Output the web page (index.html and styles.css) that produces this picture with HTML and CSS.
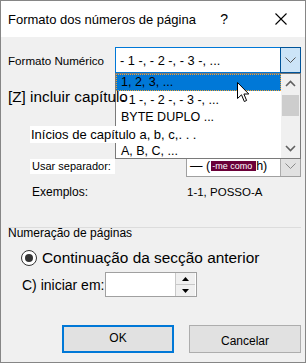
FILE: index.html
```html
<!DOCTYPE html>
<html lang="pt">
<head>
    <meta charset="UTF-8">
    <title>Formato dos números de página</title>
    <link rel="stylesheet" href="styles.css">
</head>
<body>

    <div class="dialog">
        <div class="titlebar">
            <span class="title">Formato dos números de página</span>
            <span class="title-actions">
                <span class="help">?</span>
                <svg class="close" width="12" height="12" viewBox="0 0 12 12">
                    <path d="M0.5 0.5 L11.5 11.5 M11.5 0.5 L0.5 11.5" stroke="#000" stroke-width="1.1" fill="none"/>
                </svg>
            </span>
        </div>

        <div class="content">
            <div class="row row-format">
                <span class="lbl-format">Formato Numérico</span>
                <div class="combo combo-open">
                    <span class="combo-text">- 1 -, - 2 -, - 3 -, ...</span>
                    <span class="combo-btn">
                        <svg width="11" height="6" viewBox="0 0 11 6"><path d="M0.5 0.5 L5.5 5.5 L10.5 0.5" stroke="#555" fill="none"/></svg>
                    </span>
                </div>
            </div>

            <div class="row row-chapter">
                <span class="chapter-label">[Z] incluir capítulo</span>
            </div>

            <div class="row row-starts">
                <span class="starts-label">Inícios de capítulo a, b, c,. . .</span>
            </div>

            <div class="row row-sep">
                <span class="sep-label">Usar separador:</span>
                <div class="combo combo-sep">
                    <span class="combo-text">— (<span class="tag">-me como</span>h)</span>
                    <span class="combo-btn">
                        <svg width="11" height="6" viewBox="0 0 11 6"><path d="M0.5 0.5 L5.5 5.5 L10.5 0.5" stroke="#8a8a8a" fill="none"/></svg>
                    </span>
                </div>
            </div>

            <div class="row row-examples">
                <span class="ex-label">Exemplos:</span>
                <span class="ex-value">1-1, POSSO-A</span>
            </div>

            <div class="group">
                <div class="group-title">Numeração de páginas</div>

                <div class="row row-radio">
                    <span class="radio"><span class="radio-dot"></span></span>
                    <span class="radio-label">Continuação da secção anterior</span>
                </div>

                <div class="row row-spin">
                    <span class="spin-label">C) iniciar em:</span>
                    <div class="spin">
                        <span class="spin-field"></span>
                        <span class="spin-btns">
                            <span class="spin-btn"><svg width="7" height="4" viewBox="0 0 7 4"><path d="M0 4 L3.5 0 L7 4 Z" fill="#000"/></svg></span>
                            <span class="spin-btn"><svg width="7" height="4" viewBox="0 0 7 4"><path d="M0 0 L3.5 4 L7 0 Z" fill="#000"/></svg></span>
                        </span>
                    </div>
                </div>
            </div>

            <div class="buttons">
                <button class="btn btn-default">OK</button>
                <button class="btn btn-cancel">Cancelar</button>
            </div>
        </div>

        <!-- open dropdown list of the format combo -->
        <div class="listbox">
            <div class="list-items">
                <div class="item item-selected">1, 2, 3, ...</div>
                <div class="item">- 1 -, - 2 -, - 3 -, ...</div>
                <div class="item">BYTE DUPLO ...</div>
                <div class="item"></div>
                <div class="item">A, B, C, ...</div>
            </div>
            <div class="scrollbar">
                <span class="sb-arrow">
                    <svg width="11" height="7" viewBox="0 0 11 7"><path d="M1 6 L5.5 1.5 L10 6" stroke="#606060" stroke-width="1.6" fill="none"/></svg>
                </span>
                <span class="sb-thumb"></span>
                <span class="sb-arrow sb-down">
                    <svg width="11" height="7" viewBox="0 0 11 7"><path d="M1 1 L5.5 5.5 L10 1" stroke="#606060" stroke-width="1.6" fill="none"/></svg>
                </span>
            </div>
        </div>

        <svg class="cursor" width="13" height="21" viewBox="0 0 13 21">
            <path d="M0.5 0.5 L0.5 16.5 L4.5 12.8 L7.3 19.5 L9.6 18.5 L6.9 12 L11.8 12 Z" fill="#fff" stroke="#000" stroke-width="1"/>
        </svg>
    </div>

</body>
</html>
```

FILE: styles.css
```css
body {
    margin: 0;
    font-family: 'Liberation Sans', Arial, sans-serif;
    color: #000;
}

.dialog {
    position: relative;
    width: 306px;
    height: 363px;
    box-sizing: border-box;
    border: 1px solid #868686;
    background-color: #f0f0f0;
    overflow: hidden;
}

.titlebar {
    height: 36px;
    background-color: #fff;
    display: flex;
    align-items: center;
    padding: 0 18px 0 7px;
    font-size: 13px;
}

.title {
    white-space: nowrap;
}

.title-actions {
    margin-left: auto;
    display: flex;
    align-items: center;
    gap: 47px;
}

.help {
    font-size: 14px;
}

.content {
    padding: 0 4px 0 7px;
}

.row {
    display: flex;
    align-items: center;
    white-space: nowrap;
}

.row-format {
    margin-top: 10px;
    height: 26px;
}

.lbl-format {
    font-size: 11.6px;
}

.combo {
    margin-left: auto;
    display: flex;
    box-sizing: border-box;
    background-color: #fff;
    font-size: 12.8px;
}

.combo-text {
    flex: 1;
    display: flex;
    align-items: center;
}

.combo-btn {
    display: flex;
    align-items: center;
    justify-content: center;
}

.combo-open {
    width: 186px;
    height: 26px;
    border: 1px solid #0078d7;
}

.combo-open .combo-text {
    padding-left: 4px;
}

.combo-open .combo-btn {
    width: 19px;
    background-color: #cce4f7;
    border: 1px solid #005499;
    margin: -1px -1px -1px 0;
}

.row-chapter {
    margin-top: 14px;
    height: 20px;
}

.chapter-label {
    position: relative;
    z-index: 2;
    font-size: 15.3px;
}

.row-starts {
    margin-top: 19px;
    height: 17px;
}

.starts-label {
    position: relative;
    z-index: 2;
    margin-left: 22px;
    padding: 0 3px 0 1px;
    background-color: #fff;
    font-size: 13px;
    line-height: 17px;
}

.row-sep {
    margin-top: 12px;
    height: 22px;
}

.sep-label {
    margin-left: 22px;
    width: 83px;
    padding-left: 2px;
    background-color: #fff;
    font-size: 11px;
    line-height: 15px;
}

.combo-sep {
    width: 115px;
    height: 22px;
    border: 1px solid #a0a0a0;
    font-size: 12.5px;
}

.combo-sep .combo-text {
    padding-left: 3px;
}

.tag {
    background-color: #6a0038;
    color: #fff;
    font-size: 9px;
    line-height: 10px;
    padding: 0 4px 0 1px;
    margin-left: 1px;
}

.combo-sep .combo-btn {
    width: 19px;
    background-color: #e1e1e1;
    border-left: 1px solid #adadad;
}

.row-examples {
    margin-top: 7px;
    height: 16px;
}

.ex-label {
    margin-left: 24px;
    font-size: 12px;
}

.ex-value {
    margin-left: auto;
    width: 114px;
    font-size: 11.5px;
}

.group {
    margin-top: 27px;
    border-top: 1px solid #dcdcdc;
}

.group-title {
    font-size: 12px;
    line-height: 11px;
}

.row-radio {
    margin-top: 10px;
    height: 18px;
}

.radio {
    margin-left: 13px;
    width: 16px;
    height: 16px;
    box-sizing: border-box;
    border: 1px solid #333;
    border-radius: 50%;
    background-color: #fff;
    display: flex;
    align-items: center;
    justify-content: center;
}

.radio-dot {
    width: 8px;
    height: 8px;
    border-radius: 50%;
    background-color: #333;
}

.radio-label {
    margin-left: 5px;
    font-size: 15.4px;
}

.row-spin {
    margin-top: 5px;
    height: 25px;
}

.spin-label {
    margin-left: 14px;
    font-size: 14px;
    width: 83px;
}

.spin {
    width: 92px;
    height: 25px;
    box-sizing: border-box;
    border: 1px solid #a0a0a0;
    background-color: #fff;
    display: flex;
}

.spin-field {
    flex: 1;
}

.spin-btns {
    width: 19px;
    display: flex;
    flex-direction: column;
    border-left: 1px solid #c8c8c8;
    margin-right: 1px;
}

.spin-btn {
    flex: 1;
    display: flex;
    align-items: center;
    justify-content: center;
    background-color: #f0f0f0;
}

.spin-btn + .spin-btn {
    border-top: 1px solid #c8c8c8;
}

.buttons {
    margin-top: 28px;
    display: flex;
    justify-content: flex-end;
    gap: 15px;
}

.btn {
    width: 112px;
    height: 28px;
    box-sizing: border-box;
    background-color: #e1e1e1;
    font-family: 'Liberation Sans', Arial, sans-serif;
    font-size: 12px;
    color: #000;
    padding: 0;
}

.btn-default {
    border: 2px solid #0078d7;
    padding-bottom: 2px;
}

.btn-cancel {
    border: 1px solid #adadad;
    padding-top: 4px;
}

.listbox {
    position: absolute;
    left: 114px;
    top: 72px;
    width: 186px;
    height: 86px;
    box-sizing: border-box;
    border: 1px solid #7a7a7a;
    background-color: #fff;
    display: flex;
    z-index: 1;
}

.list-items {
    flex: 1;
    font-size: 12.5px;
}

.item {
    height: 17px;
    line-height: 17px;
    padding-left: 5px;
    white-space: nowrap;
}

.item-selected {
    background-color: #0078d7;
    outline: 1px dotted #f0a030;
    outline-offset: -1px;
}

.item-selected + .item {
    height: 18px;
    line-height: 18px;
}

.scrollbar {
    width: 19px;
    background-color: #f0f0f0;
    display: flex;
    flex-direction: column;
    align-items: center;
}

.sb-arrow {
    height: 18px;
    display: flex;
    align-items: center;
    justify-content: center;
}

.sb-thumb {
    margin-top: 3px;
    width: 17px;
    height: 21px;
    background-color: #cdcdcd;
}

.sb-down {
    margin-top: auto;
    height: 20px;
}

.cursor {
    position: absolute;
    left: 236px;
    top: 81px;
    z-index: 3;
}
```
